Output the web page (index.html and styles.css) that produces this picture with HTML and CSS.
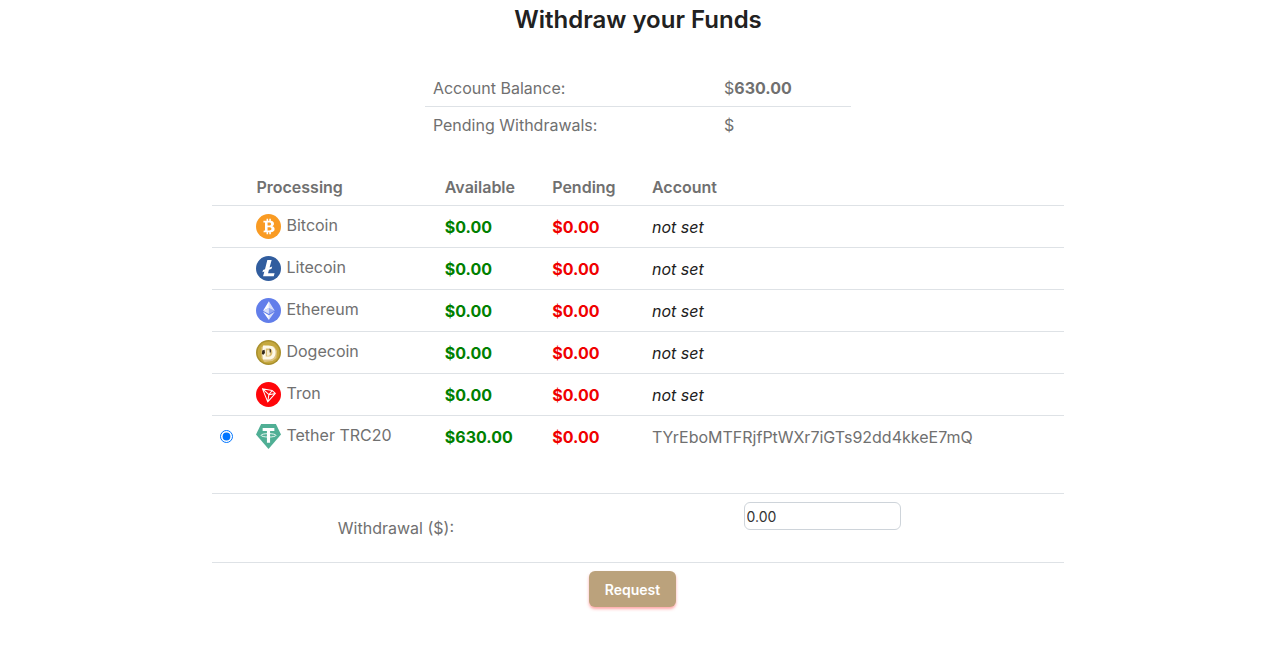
FILE: index.html
```
<!DOCTYPE html>
<html lang="en">
<head>
    <meta charset="UTF-8">
    <meta name="viewport" content="width=device-width, initial-scale=1.0">
    <title>Withdraw your Funds</title>
    <link rel="stylesheet" href="styles.css">
</head>

<body>
    <main class="container">
        <h1>Withdraw your Funds</h1>

        <table class="balance">
            <tr>
                <td class="balance-label">Account Balance:</td>
                <td>$<b>630.00</b></td>
            </tr>
            <tr>
                <td class="balance-label">Pending Withdrawals:</td>
                <td>$</td>
            </tr>
        </table>

        <form>
            <table class="accounts">
                <colgroup>
                    <col class="col-pick">
                    <col class="col-name">
                    <col class="col-available">
                    <col class="col-pending">
                    <col>
                </colgroup>
                <thead>
                    <tr>
                        <th></th>
                        <th>Processing</th>
                        <th>Available</th>
                        <th>Pending</th>
                        <th>Account</th>
                    </tr>
                </thead>
                <tbody>
                    <tr>
                        <td></td>
                        <td>
                            <div class="coin">
                                <svg viewBox="0 0 32 32" aria-hidden="true">
                                    <circle cx="16" cy="16" r="16" fill="#f99b23"/>
                                    <path fill="#fff" fill-rule="evenodd" d="M9.5 8.5h4V6h2v2.500h1.500V6h2v2.700c2.500.4 4 1.500 4 3.700 0 1.700-.9 2.700-2.300 3.200 2 .4 3.100 1.700 3.100 3.700 0 2.700-1.800 4-4.800 4.200V26h-2v-2.500h-1.500V26h-2v-2.500h-4l.5-2.300h1.500V10.800h-2zM14.800 10.900v3.700h1.700c1.700 0 2.700-.5 2.700-1.900 0-1.300-1-1.800-2.600-1.800zM14.800 16.900v4.200h2c1.900 0 3-.6 3-2.100s-1.100-2.100-3-2.100z"/>
                                </svg>
                                <span>Bitcoin</span>
                            </div>
                        </td>
                        <td class="available">$0.00</td>
                        <td class="pending">$0.00</td>
                        <td><i class="not-set">not set</i></td>
                    </tr>
                    <tr>
                        <td></td>
                        <td>
                            <div class="coin">
                                <svg viewBox="0 0 32 32" aria-hidden="true">
                                    <circle cx="16" cy="16" r="16" fill="#315d9e"/>
                                    <path fill="#fff" d="M14.500 5h5.500l-2.600 9.600 3.300-1.300-.8 2.900-3.300 1.300-1.200 4.500h8.400L22.700 26H9l1.700-6.200-2.500 1 .8-2.900 2.500-1z"/>
                                </svg>
                                <span>Litecoin</span>
                            </div>
                        </td>
                        <td class="available">$0.00</td>
                        <td class="pending">$0.00</td>
                        <td><i class="not-set">not set</i></td>
                    </tr>
                    <tr>
                        <td></td>
                        <td>
                            <div class="coin">
                                <svg viewBox="0 0 32 32" aria-hidden="true">
                                    <circle cx="16" cy="16" r="16" fill="#627eea"/>
                                    <path fill="#fff" opacity=".75" d="M16.500 4v8.900l7.500 3.300zM16.500 22v6l7.500-10.400zM9 16.200l7.500 4.400v-7.700z"/>
                                    <path fill="#fff" d="M16.500 4L9 16.200l7.500-3.300zM16.500 28v-6L9 17.600z"/>
                                    <path fill="#fff" opacity=".3" d="M16.500 20.600l7.500-4.400-7.500-3.300z"/>
                                </svg>
                                <span>Ethereum</span>
                            </div>
                        </td>
                        <td class="available">$0.00</td>
                        <td class="pending">$0.00</td>
                        <td><i class="not-set">not set</i></td>
                    </tr>
                    <tr>
                        <td></td>
                        <td>
                            <div class="coin">
                                <svg viewBox="0 0 32 32" aria-hidden="true">
                                    <circle cx="16" cy="16" r="16" fill="#a88f2c"/>
                                    <circle cx="16" cy="16" r="14" fill="#c5a83e"/>
                                    <path fill="#dcc383" d="M7 9l4-2 3 2 9-1 4 6-1 9-5 4-10 1-4-5z"/>
                                    <path fill="#fdf8e8" d="M9 7h7c6 0 9 3.500 9 9s-3 9-9 9H9l-1-7z"/>
                                    <path fill="#d9bd72" d="M12.500 11h4c3 0 4.500 2 4.500 5s-1.500 5-4.500 5h-4z"/>
                                    <path fill="#f6ecd0" d="M14 13h3l1.500 3-1.500 4h-3z"/>
                                    <path fill="#33291c" d="M8 13.500l3-1 .5 4L9.500 19 7.500 18zM17.500 11l1.500 1v4h-1.500z"/>
                                </svg>
                                <span>Dogecoin</span>
                            </div>
                        </td>
                        <td class="available">$0.00</td>
                        <td class="pending">$0.00</td>
                        <td><i class="not-set">not set</i></td>
                    </tr>
                    <tr>
                        <td></td>
                        <td>
                            <div class="coin">
                                <svg viewBox="0 0 32 32" aria-hidden="true">
                                    <circle cx="16" cy="16" r="16" fill="#ff060a"/>
                                    <path fill="none" stroke="#fff" stroke-width="1.3" stroke-linejoin="round" d="M8.200 8.500l12.600 2.400 4 3.700L15 25.500zM8.200 8.500l8.300 7.700L15 25.500M16.500 16.200l4.300-5.300M16.500 16.200l8.300-1.600"/>
                                </svg>
                                <span>Tron</span>
                            </div>
                        </td>
                        <td class="available">$0.00</td>
                        <td class="pending">$0.00</td>
                        <td><i class="not-set">not set</i></td>
                    </tr>
                    <tr>
                        <td><input type="radio" name="coin" id="tether" checked></td>
                        <td>
                            <label class="coin" for="tether">
                                <svg viewBox="0 0 32 32" aria-hidden="true">
                                    <path fill="#50af95" d="M6.500 0h19L32 13.500 16 32 0 13.500z"/>
                                    <path fill="#fff" d="M8.500 5h15v4H18v15h-4V9H8.500z"/>
                                    <ellipse cx="16" cy="14.5" rx="9.5" ry="2.2" fill="none" stroke="#fff" stroke-width="1.1"/>
                                </svg>
                                <span>Tether TRC20</span>
                            </label>
                        </td>
                        <td class="available">$630.00</td>
                        <td class="pending">$0.00</td>
                        <td>TYrEboMTFRjfPtWXr7iGTs92dd4kkeE7mQ</td>
                    </tr>
                </tbody>
            </table>

            <div class="amount-row">
                <label for="amount">Withdrawal ($):</label>
                <input type="text" id="amount" name="amount" value="0.00">
            </div>

            <div class="submit-row">
                <button type="submit" class="btn">Request</button>
            </div>
        </form>
    </main>
</body>
</html>
```
FILE: styles.css
```
* {
    box-sizing: border-box;
}

body {
    margin: 0;
    padding-right: 2px;
    background: #fff;
    color: #707070;
    font-family: Inter, 'Liberation Sans', sans-serif;
    font-size: 16px;
    line-height: 20px;
}

.container {
    width: 66.8%;
    margin: 0 auto;
}

h1 {
    margin: 0 0 30px;
    padding: 5px 0;
    color: #212121;
    font-size: 24px;
    font-weight: 600;
    line-height: 30px;
    text-align: center;
}

table {
    border-collapse: separate;
    border-spacing: 0;
    table-layout: fixed;
}

th,
td {
    padding: 8px;
    border-bottom: 1px solid #dee2e6;
    text-align: left;
    vertical-align: middle;
}

th {
    font-weight: 600;
}

tr:last-child td {
    border-bottom: none;
}

.balance {
    width: 50%;
    margin: 0 auto 26px;
}

.balance-label {
    width: 68.3%;
}

.accounts {
    width: 100%;
}

.col-pick {
    width: 4.3%;
}

.col-name {
    width: 22.1%;
}

.col-available {
    width: 12.6%;
}

.col-pending {
    width: 11.7%;
}

.accounts input {
    display: block;
    width: 13px;
    height: 13px;
    margin: 0;
}

.coin {
    display: flex;
    gap: 5px;
    height: 25px;
    line-height: 22px;
}

.coin svg {
    width: 25px;
    height: 25px;
}

.available,
.pending {
    font-weight: 700;
}

.available {
    color: #008000;
}

.pending {
    color: #f00000;
}

.not-set {
    color: #212121;
}

.amount-row {
    display: grid;
    grid-template-columns: 43.2% 1fr;
    align-items: center;
    justify-items: center;
    margin-top: 36px;
    padding: 8px 0;
    border: 1px solid #dee2e6;
    border-width: 1px 0;
}

.amount-row input {
    width: 157px;
    height: 28px;
    margin-bottom: 24px;
    padding: 2px;
    border: 1px solid #ced4da;
    border-radius: 6px;
    background: #fff;
    color: #333;
    font: 14px Inter, 'Liberation Sans', sans-serif;
}

.submit-row {
    padding: 8px 11px 8px 0;
    text-align: center;
}

.btn {
    height: 36px;
    padding: 0 16px;
    border: none;
    border-radius: 6px;
    background: #bba27c;
    box-shadow: 0 2px 3px rgba(255, 80, 80, 0.5);
    color: #fff;
    font: 600 14px Inter, 'Liberation Sans', sans-serif;
    cursor: pointer;
}
```
